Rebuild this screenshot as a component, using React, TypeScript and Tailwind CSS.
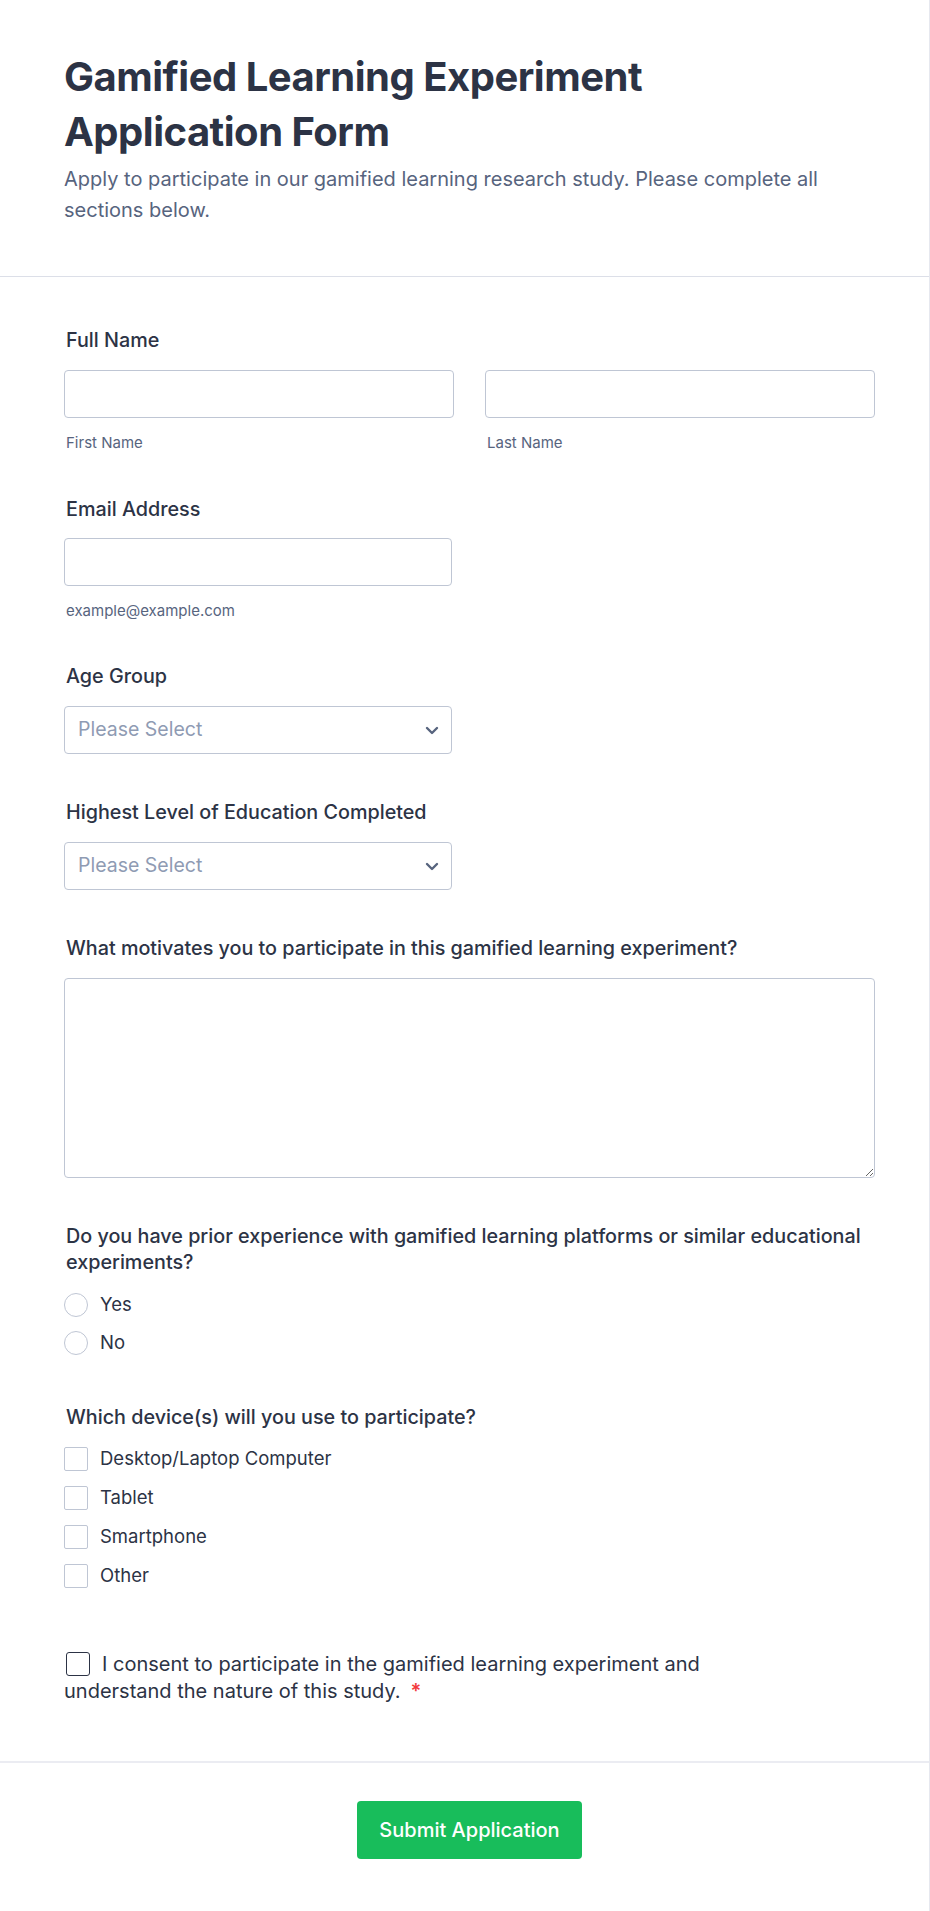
import React from "react";

function Chevron() {
  return (
    <svg width="14" height="9" viewBox="0 0 14 9" fill="none" aria-hidden>
      <path d="M2 2l5 5 5-5" stroke="#57647e" strokeWidth="2.4" strokeLinecap="round" strokeLinejoin="round" />
    </svg>
  );
}

function Select() {
  return (
    <div className="flex h-[48px] w-[388px] items-center justify-between rounded-[4px] border border-[#bfc6d4] pl-[13px] pr-[12px]">
      <span className="text-[19.5px] text-[#8f9bb3]">Please Select</span>
      <Chevron />
    </div>
  );
}

export default function App() {
  const devices = ["Desktop/Laptop Computer", "Tablet", "Smartphone", "Other"];

  return (
    <div className="min-h-[1911px] w-[930px] border-r border-[#e6e8ef] bg-white font-['Inter',sans-serif] text-[#2c3345]">
      {/* Header */}
      <div className="pl-16 pr-[54px] pt-[49px] pb-[50px]">
        <h1 className="max-w-[700px] text-[40px] leading-[55px] font-bold tracking-[-0.5px]">
          Gamified Learning Experiment Application Form
        </h1>
        <p className="mt-[5px] text-[20px] leading-[31px] text-[#57647e]">
          Apply to participate in our gamified learning research study. Please complete all sections below.
        </p>
      </div>

      <div className="h-px bg-[#dcdfe8]" />

      <div className="flex flex-col pl-16 pr-[54px] pt-[50px]">
        {/* Full name */}
        <label className="pl-[2px] text-[19.75px] leading-[26px] font-medium">Full Name</label>
        <div className="mt-[17px] flex gap-[31px]">
          <div className="flex-1">
            <input className="h-[48px] w-full rounded-[4px] border border-[#bfc6d4] px-3 outline-none" />
            <div className="mt-[15px] pl-[2px] text-[15px] leading-[20px] text-[#57647e]">First Name</div>
          </div>
          <div className="flex-1">
            <input className="h-[48px] w-full rounded-[4px] border border-[#bfc6d4] px-3 outline-none" />
            <div className="mt-[15px] pl-[2px] text-[15px] leading-[20px] text-[#57647e]">Last Name</div>
          </div>
        </div>

        {/* Email */}
        <label className="mt-[43px] pl-[2px] text-[19.75px] leading-[26px] font-medium">Email Address</label>
        <input className="mt-4 h-[48px] w-[388px] rounded-[4px] border border-[#bfc6d4] px-3 outline-none" />
        <div className="mt-[15px] pl-[2px] text-[15px] leading-[20px] text-[#57647e]">example@example.com</div>

        {/* Age */}
        <label className="mt-[42px] pl-[2px] text-[19.75px] leading-[26px] font-medium">Age Group</label>
        <div className="mt-[17px]">
          <Select />
        </div>

        {/* Education */}
        <label className="mt-[45px] pl-[2px] text-[19.75px] leading-[26px] font-medium">
          Highest Level of Education Completed
        </label>
        <div className="mt-[17px]">
          <Select />
        </div>

        {/* Motivation */}
        <label className="mt-[45px] pl-[2px] text-[19.75px] leading-[26px] font-medium">
          What motivates you to participate in this gamified learning experiment?
        </label>
        <textarea className="mt-[17px] h-[200px] w-full rounded-[4px] border border-[#bfc6d4] p-3 outline-none" />

        {/* Prior experience */}
        <label className="mt-[45px] pl-[2px] text-[19.75px] leading-[26px] font-medium">
          Do you have prior experience with gamified learning platforms or similar educational experiments?
        </label>
        <div className="mt-[18px] flex flex-col gap-[14px]">
          {["Yes", "No"].map((o) => (
            <div key={o} className="flex h-[24px] items-center gap-3">
              <span className="h-[24px] w-[24px] rounded-full border border-[#bfc6d4]" />
              <span className="text-[18.5px]">{o}</span>
            </div>
          ))}
        </div>

        {/* Devices */}
        <label className="mt-[49px] pl-[2px] text-[19.75px] leading-[26px] font-medium">
          Which device(s) will you use to participate?
        </label>
        <div className="mt-[17px] flex flex-col gap-[15px]">
          {devices.map((d) => (
            <div key={d} className="flex h-[24px] items-center gap-3">
              <span className="h-[24px] w-[24px] rounded-[2px] border border-[#bfc6d4]" />
              <span className="text-[18.5px]">{d}</span>
            </div>
          ))}
        </div>

        {/* Consent */}
        <p className="mt-[63px] max-w-[680px] text-[20px] leading-[27px]">
          <span className="mr-[12px] ml-[2px] inline-block h-[24px] w-[24px] rounded-[3px] border-[1.5px] border-[#2c3345] align-[-5px]" />
          I consent to participate in the gamified learning experiment and understand the nature of this study.
          <span className="ml-[10px] font-semibold text-[#f23a3c]">*</span>
        </p>
      </div>

      <div className="mt-[56px] h-[2px] bg-[#ebecf2]" />

      {/* Submit */}
      <div className="flex justify-center pl-16 pr-[54px] pt-[38px] pb-[51px]">
        <button className="h-[58px] rounded-[4px] bg-[#18bd5b] px-[22px] text-[20px] font-medium text-white">
          Submit Application
        </button>
      </div>
    </div>
  );
}
